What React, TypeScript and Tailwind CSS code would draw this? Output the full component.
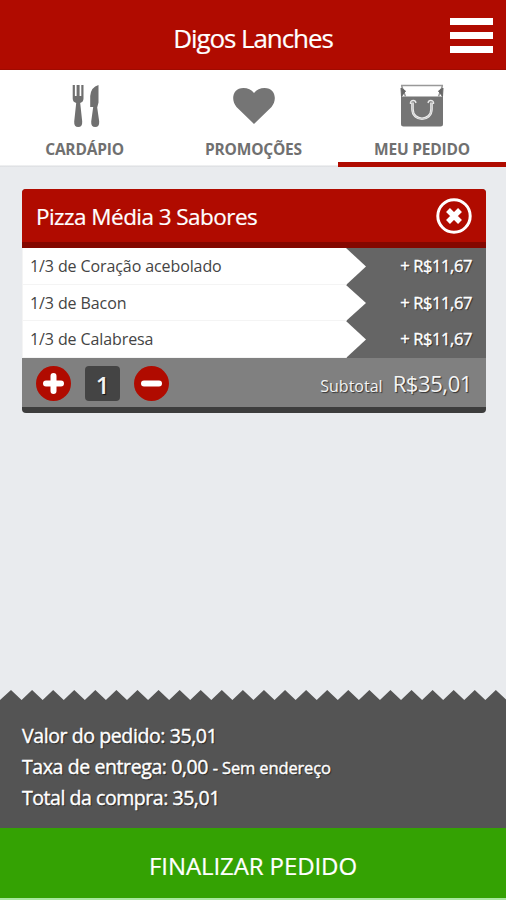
import React, { useState } from 'react';

interface Flavor {
  id: number;
  name: string;
  price: string;
}

const flavors: Flavor[] = [
  { id: 1, name: '1/3 de Coração acebolado', price: 'R$11,67' },
  { id: 2, name: '1/3 de Bacon', price: 'R$11,67' },
  { id: 3, name: '1/3 de Calabresa', price: 'R$11,67' }
];

const CutleryIcon = () => (
  <svg width="44" height="44" viewBox="0 0 44 44" fill="#707070">
    <path d="M9.700 1h2.200v11h1.700V1h3v11h1.700V1h2.200v13.500q0 3.500-3.300 4.500l2 18.500q.3 5.500-4 5.500t-4-5.500l2-18.500q-3.500-1-3.500-4.500z" />
    <path d="M35.500 1v17.500l-1.300 5 2 14q.3 5.500-4 5.500t-4-5.500l2-14.500h-3V12q.8-9 8.300-11z" />
  </svg>
);

const HeartIcon = () => (
  <svg width="44" height="44" viewBox="0 0 44 44" fill="#757575">
    <path d="M22 40L4.500 23C-1.500 16 .5 4 11.500 4Q18 4 22 9Q26 4 32.500 4C43.500 4 45.500 16 39.500 23z" />
  </svg>
);

const BagIcon = () => (
  <svg width="44" height="44" viewBox="0 0 44 44">
    <path d="M1 12.500h42V40a2.500 2.500 0 0 1-2.500 2.500h-37A2.500 2.500 0 0 1 1 40z" fill="#757575" />
    <path d="M1 1.500h42M1.500 1.500l4 11M42.500 1.500l-4 11" stroke="#999" strokeWidth="1.500" fill="none" />
    <path d="M1 4l4.500 3L1.500 12.500zM43 4l-4.500 3 4 5.500z" fill="#666" stroke="#666" />
    <path d="M10.500 20q-.5-3.500 3-3.500 2 0 2.500 2.500M33.500 20q.5-3.500-3-3.500-2 0-2.500 2.500" stroke="#e8e8e8" strokeWidth="1.400" fill="none" />
    <path d="M12.500 18.500V25c0 13 19 13 19 0v-6.500" stroke="#eee" strokeWidth="2.600" fill="none" />
    <path d="M12.500 18.500V25c0 13 19 13 19 0v-6.500" stroke="#aaa" strokeWidth=".5" fill="none" />
  </svg>
);

const tabs = [
  { id: 'menu', label: 'CARDÁPIO', icon: <CutleryIcon /> },
  { id: 'promo', label: 'PROMOÇÕES', icon: <HeartIcon /> },
  { id: 'order', label: 'MEU PEDIDO', icon: <BagIcon /> }
];

const teeth = Array.from({ length: 24 }, (_, i) => `L${i * 21.08 + 11} 0L${(i + 1) * 21.08 + 0.5} 10`).join('');

export default function App() {
  const [activeTab, setActiveTab] = useState('order');
  const [quantity, setQuantity] = useState(1);

  return (
    <div className="flex h-[900px] w-[506px] flex-col overflow-hidden bg-[#e9ebee] font-['Open_Sans','Noto_Sans',sans-serif] whitespace-nowrap">
      <header className="grid h-[70px] shrink-0 grid-cols-[1fr_auto_1fr] items-center border-b border-[#a00a00] bg-[#b00b00] px-[13px] text-white">
        <span />
        <h1 className="pt-1.5 text-[26px] leading-9 tracking-[-1.1px] [-webkit-text-stroke:0.2px_white]">Digos Lanches</h1>
        <button className="flex flex-col gap-[7px] justify-self-end pt-[2px]" aria-label="Menu">
          <span className="h-[7px] w-[43px] bg-white" />
          <span className="h-[7px] w-[43px] bg-white" />
          <span className="h-[7px] w-[43px] bg-white" />
        </button>
      </header>

      <nav className="grid h-[97px] shrink-0 grid-cols-[169px_169px_168px] bg-[linear-gradient(#fff_95px,#dcdee1_96px,#e3e5e8)]">
        {tabs.map((tab) => (
          <button
            key={tab.id}
            onClick={() => setActiveTab(tab.id)}
            className={`flex flex-col items-center border-b-[5px] pt-3.5 ${
              activeTab === tab.id ? 'border-[#b00b00]' : 'border-transparent'
            }`}
          >
            {tab.icon}
            <span className="mt-2.5 text-[15.5px] leading-[22px] font-bold tracking-[-0.2px] text-[#707070]">{tab.label}</span>
          </button>
        ))}
      </nav>

      <main className="flex-1 px-[22px] pt-[22px]">
        <section className="mr-[-2px] flex h-[224px] flex-col overflow-hidden rounded-[4px] border-b-[6px] border-[#3d3d3d] bg-[#656565]">
          <div className="flex h-[59px] shrink-0 items-center justify-between border-b-[6px] border-[#840700] bg-[#b00b00] px-3.5 text-white">
            <h2 className="pt-[3px] text-[22.5px] tracking-[-0.55px] [-webkit-text-stroke:0.2px_white]">Pizza Média 3 Sabores</h2>
            <button aria-label="Remover">
              <svg width="36" height="36" viewBox="0 0 36 36" fill="none" stroke="#fff">
                <circle cx="18" cy="18" r="16.200" strokeWidth="3" />
                <path d="M12 12l12 12M24 12L12 24" strokeWidth="5.500" />
              </svg>
            </button>
          </div>

          <ul className="flex shrink-0 flex-col">
            {flavors.map((flavor) => (
              <li key={flavor.id} className="flex h-[37px] items-center justify-between pr-3.5 even:h-[36px]">
                <div className="flex h-full w-[344px] items-center border-b border-l border-[#f4f4f4] bg-white pl-[7px] [clip-path:polygon(0_0,324px_0,100%_50%,324px_100%,0_100%)]">
                  <span className="text-[16px] tracking-[-0.1px] text-[#444]">{flavor.name}</span>
                </div>
                <span className="text-[16.5px] tracking-[-0.4px] text-white [-webkit-text-stroke:0.4px_white] [text-shadow:1px_1px_1px_#222]">
                  + {flavor.price}
                </span>
              </li>
            ))}
          </ul>

          <div className="flex flex-1 items-center bg-[#808080] px-3.5 pt-0.5 text-[#f4f4f4]">
            <button onClick={() => setQuantity(quantity + 1)} aria-label="Aumentar">
              <svg width="35" height="35" viewBox="0 0 35 35">
                <circle cx="17.500" cy="17.500" r="17.500" fill="#b00b00" />
                <path d="M10 17.500h15M17.500 10v15" stroke="#fff" strokeWidth="6" strokeLinecap="round" />
              </svg>
            </button>
            <span className="mx-3.5 flex size-[35px] items-center justify-center rounded-[4px] bg-[#444] pt-0.5 text-[24px] font-semibold [text-shadow:1px_1px_1px_#111]">
              {quantity}
            </span>
            <button onClick={() => setQuantity(Math.max(1, quantity - 1))} aria-label="Diminuir">
              <svg width="35" height="35" viewBox="0 0 35 35">
                <circle cx="17.500" cy="17.500" r="17.500" fill="#b00b00" />
                <path d="M10 17.500h15" stroke="#fff" strokeWidth="6" strokeLinecap="round" />
              </svg>
            </button>
            <div className="ml-auto flex items-baseline gap-2.5 [text-shadow:1px_1px_1px_#333]">
              <span className="text-[16px]">Subtotal</span>
              <span className="text-[22px] tracking-[-0.4px]">R$35,01</span>
            </div>
          </div>
        </section>
      </main>

      <svg className="block h-[10px] w-full shrink-0" viewBox="0 0 506 10" fill="#545454">
        <path d={`M0 10${teeth}V10z`} />
      </svg>
      <section className="flex h-[128px] shrink-0 flex-col bg-[#545454] pt-[21px] pl-[22px] text-[19.5px] leading-[30.5px] text-white [-webkit-text-stroke:0.4px_white] [text-shadow:1px_1px_1px_#222]">
        <p className="tracking-[-0.4px]">Valor do pedido: 35,01</p>
        <p className="tracking-[-0.4px]">
          Taxa de entrega: 0,00 <span className="text-[16.5px] tracking-[-0.15px]">- Sem endereço</span>
        </p>
        <p className="tracking-[-0.45px]">Total da compra: 35,01</p>
      </section>

      <button className="h-[70px] shrink-0 bg-[#34a203] pt-1.5 text-[24px] tracking-[-0.1px] text-white [-webkit-text-stroke:0.2px_white]">
        FINALIZAR PEDIDO
      </button>
      <div className="h-[2px] shrink-0 bg-[#a9e7a0]" />
    </div>
  );
}
